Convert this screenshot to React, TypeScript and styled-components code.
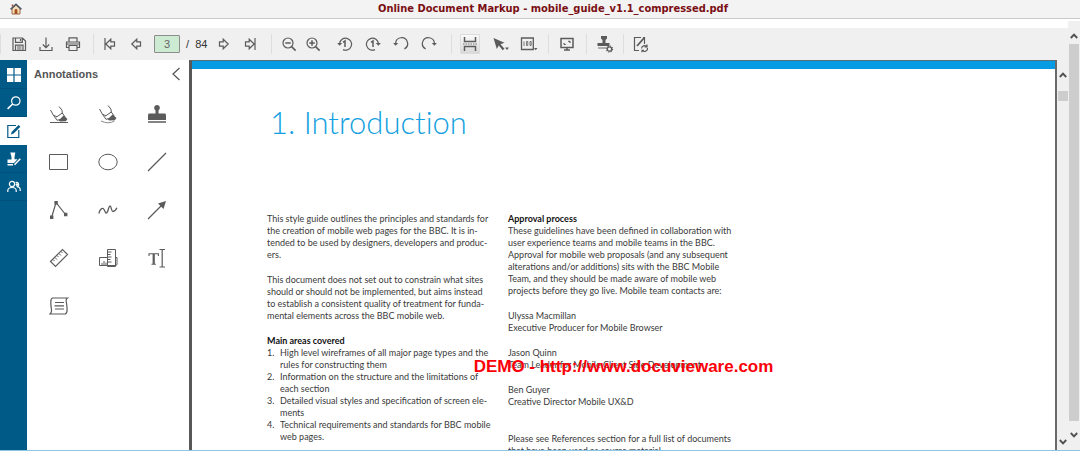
import React from "react";
import styled, { createGlobalStyle } from "styled-components";

const Global = createGlobalStyle`
  *, *::before, *::after { box-sizing: border-box; }
  body { margin: 0; background: #fff; font-family: "Liberation Sans", Arial, sans-serif; }
  button { font: inherit; }
`;

const Shell = styled.div`
  display: flex;
  flex-direction: column;
  height: 100vh;
  overflow: hidden;
  border-bottom: 1px solid #8cc6e4;
`;

const Header = styled.header`
  display: grid;
  grid-template-columns: 32px 1fr 6px;
  align-items: center;
  height: 19px;
  flex: none;
  background: #f3f3f3;
  border-bottom: 1px solid #c9c9c9;
`;

const HomeLink = styled.a`
  display: flex;
  justify-content: center;
`;

const Title = styled.h1`
  margin: 0;
  text-align: center;
  white-space: nowrap;
  color: #7a0f14;
  font: bold 11px/18px "DejaVu Sans Condensed", Tahoma, sans-serif;
`;

const Body = styled.div`
  display: flex;
  flex: 1;
  min-height: 0;
`;

const Viewer = styled.main`
  display: flex;
  flex-direction: column;
  flex: 1;
  min-width: 0;
  padding-top: 9px;
`;

const Toolbar = styled.div`
  display: flex;
  align-items: center;
  flex: none;
  height: 32px;
  background: #f0f0f0;
`;

const Group = styled.div<{ $pad?: number; $end?: number }>`
  display: flex;
  align-items: center;
  height: 20px;
  padding-left: ${(p) => p.$pad ?? 4}px;
  padding-right: ${(p) => p.$end ?? 5}px;
  border-left: 1px solid #dedede;
`;

const ToolButton = styled.button<{ $w?: number; $gap?: number }>`
  display: flex;
  align-items: center;
  justify-content: center;
  width: ${(p) => p.$w ?? 28}px;
  height: 20px;
  margin-left: ${(p) => p.$gap ?? 0}px;
  padding: 0;
  border: 0;
  background: none;
  color: #5b5b5b;
`;

const PressedButton = styled(ToolButton)`
  border: 1px solid #dcdcdc;
  border-radius: 1px;
  background: linear-gradient(#fafafa, #d8d8d8);
`;

const PageInput = styled.input`
  width: 26px;
  height: 18px;
  margin: 0 6px 0 4px;
  padding: 0;
  border: 1px solid #8c8c8c;
  border-radius: 1px;
  background: #cdebd2;
  color: #666;
  text-align: center;
  font: 11px "Liberation Sans", Arial, sans-serif;
`;

const PageTotal = styled.span`
  width: 23px;
  white-space: pre;
  color: #333;
  font: 11px "Liberation Sans", Arial, sans-serif;
`;

const Workspace = styled.div`
  display: flex;
  flex: 1;
  min-height: 0;
`;

const Rail = styled.nav`
  width: 27px;
  flex: none;
  padding-top: 1px;
  background: #005a87;
`;

const RailTab = styled.button<{ $active?: boolean }>`
  display: flex;
  align-items: center;
  justify-content: center;
  width: 27px;
  height: 28px;
  padding: 0;
  border: 0;
  border-bottom: 1px solid ${(p) => (p.$active ? "#fff" : "#00507c")};
  background: ${(p) => (p.$active ? "#fff" : "#005a87")};
  color: ${(p) => (p.$active ? "#005a87" : "#fff")};
`;

const Panel = styled.aside`
  width: 162px;
  flex: none;
  background: #fff;
`;

const PanelHeader = styled.div`
  display: flex;
  align-items: center;
  justify-content: space-between;
  height: 28px;
  padding: 0 8px 0 7px;
`;

const PanelTitle = styled.h2`
  margin: 0;
  color: #555;
  font: bold 11px/14px "Liberation Sans", Arial, sans-serif;
`;

const CollapseButton = styled.button`
  display: flex;
  padding: 0;
  border: 0;
  background: none;
  color: #555;
`;

const ToolGrid = styled.div`
  display: grid;
  grid-template-columns: repeat(3, 49px);
  grid-auto-rows: 48px;
  margin-top: 2px;
  padding-left: 7px;
`;

const GridButton = styled.button`
  display: flex;
  align-items: center;
  justify-content: center;
  padding: 0;
  border: 0;
  background: none;
  color: #5b5b5b;
`;

const Page = styled.article`
  position: relative;
  flex: 1;
  min-width: 0;
  overflow: hidden;
  border-top: 1px solid #5a6e78;
  border-left: 3px solid #585858;
  border-right: 2px solid #6a6a6a;
  background: #fff;
`;

const Banner = styled.div`
  height: 8px;
  background: #079be3;
`;

const Heading = styled.h2`
  margin: 33px 0 0 78px;
  color: #139fe0;
  font: 300 31px/40px Lato, "Gill Sans", sans-serif;
  font-variant-ligatures: none;
`;

const Columns = styled.div`
  display: grid;
  grid-template-columns: 241px 241px;
  margin: 71px 0 0 75px;
  color: #3a3a3a;
  font: 9px/12px Lato, "Gill Sans", sans-serif;
`;

const Column = styled.div`
  display: flex;
  flex-direction: column;
  gap: 13px;
`;

const Text = styled.p`
  margin: 0;
  white-space: pre;
`;

const SubHeading = styled.h3`
  margin: 0;
  color: #111;
  font: inherit;
  font-weight: bold;
`;

const Areas = styled.ol`
  margin: 0;
  padding: 0;
  list-style: none;
`;

const Area = styled.li`
  display: flex;
  white-space: pre;
`;

const AreaNumber = styled.span`
  width: 13px;
  flex: none;
`;

const Closing = styled(Text)`
  margin-top: 12px;
`;

const Watermark = styled.div`
  position: absolute;
  top: 297px;
  left: 50%;
  transform: translateX(-50%);
  white-space: nowrap;
  color: #fb0007;
  font: bold 17px/18px "Liberation Sans", Arial, sans-serif;
`;

const Track = styled.div<{ $top: number; $bottom: number }>`
  display: flex;
  flex-direction: column;
  align-items: center;
  flex: none;
  width: 11px;
  padding: ${(p) => p.$top}px 0 ${(p) => p.$bottom}px;
  background: #f0f0f0;
`;

const OuterTrack = styled(Track)`
  width: 12px;
  margin-top: 2px;
`;

const Arrow = styled.button`
  display: flex;
  padding: 0;
  border: 0;
  background: none;
  color: #505050;
`;

const Thumb = styled.div<{ $grow?: boolean }>`
  width: 10px;
  height: 10px;
  flex: ${(p) => (p.$grow ? "1" : "none")};
  margin: ${(p) => (p.$grow ? "5px 0 11px" : "13px 0 auto")};
  background: #cdcdcd;
`;

type IconProps = { w?: number; h?: number; sw?: number; children: React.ReactNode };
const Icon = ({ w = 16, h = 16, sw = 1.2, children }: IconProps) => (
  <svg width={w} height={h} viewBox={`0 0 ${w} ${h}`} fill="none" stroke="currentColor" strokeWidth={sw} aria-hidden="true">
    {children}
  </svg>
);

const Fill = { fill: "currentColor", stroke: "none" };

const Chevron = ({ down }: { down?: boolean }) => (
  <Icon w={8} h={6} sw={1.9}>
    <path d={down ? "M.8 1 4 4.4 7.2 1" : "M.8 5 4 1.6 7.2 5"} />
  </Icon>
);

const HomeIcon = () => (
  <Icon w={12} h={12} sw={1}>
    <path d="M2 5.500 6 2l4 3.500V11H2z" fill="#f1dcb8" stroke="#a06a48" />
    <path d="M.6 6.400 6 1.200l5.400 5.200" stroke="#4c5664" strokeWidth="1.500" />
    <path d="M2.500 1.500v2" stroke="#99482c" strokeWidth="1.500" />
    <path d="M4.600 11V7.500a1.400 1.400 0 0 1 2.800 0V11z" fill="#a84e22" stroke="none" />
  </Icon>
);

const LeftArrow = "M7.800 3.200v2.600h3.700v4.400H7.800v2.600L2.800 8z";
const RightArrow = "M8.200 3.200v2.600H4.500v4.400h3.700v2.600L13.200 8z";

const rotation = (clockwise: boolean, one: boolean) => (
  <Icon>
    <g transform={clockwise ? undefined : "matrix(-1 0 0 1 16 0)"}>
      <path d={one ? "M10 13.600A6 6 0 1 1 13.400 7.500" : "M4.600 13A6 6 0 1 1 13.400 7.500"} />
      <path d="M10.800 7h5l-2.400 2.800z" {...Fill} />
    </g>
    {one && <path d="M6 6.300 8 5v6" strokeWidth="1.500" />}
  </Icon>
);

const Magnifier = ({ plus }: { plus?: boolean }) => (
  <Icon>
    <circle cx="7" cy="7" r="5" />
    <path d="m10.600 10.600 4 4" strokeWidth="1.600" />
    <path d={plus ? "M4.300 7h5.400M7 4.300v5.400" : "M4.300 7h5.400"} strokeWidth="1.500" />
  </Icon>
);

const Highlighter = ({ curved }: { curved?: boolean }) => (
  <Icon w={20} h={20} sw={1}>
    <g transform={curved ? "translate(0 -1)" : undefined}>
      <path d="m1.500 6 2.800 5.200 3.700 1.600M10 2.500l3 3.700.3 3.300" />
      <path d="m4.500 11.300 3.500 5 4-1M7.500 13l5.800-4 3 4.300" />
      <path d="m9.800 16.200 4.800-4.700 3.900 3.500-1.700 2.200-5.800.3z" {...Fill} />
    </g>
    {curved ? <path d="M3 17q7 3.500 13.500 0" stroke="#8a8a8a" /> : <path d="M1 18.500h18" />}
  </Icon>
);

const SaveIcon = () => (
  <Icon>
    <path d="M2 2h9.500L14.500 5v9.500H2zM4.500 2.500v3.800h6.800V2.500M4.500 14.500V9.200h7.500v5.300M6 11h4.500M6 13h4.500M9.500 3v2" />
  </Icon>
);
const DownloadIcon = () => (
  <Icon><path d="M8 1.500v10M4.800 8.500 8 11.700l3.200-3.200M2 11v3.500h12V11" /></Icon>
);
const PrintIcon = () => (
  <Icon>
    <path d="M4 6V1.800h8V6M4 11.500H1.500V6h13v5.500H12M4 9.500h8v5H4z" />
    <path d="M2 8h12" strokeWidth="1" />
  </Icon>
);
const PageViewIcon = () => (
  <Icon>
    <path d="M2.500 1v4.500h11V1M2.500 15v-4.500h11V15" strokeWidth="1.500" />
    <path d="M1 8h14" strokeDasharray="1.500 1" strokeWidth="1.300" stroke="#999" />
  </Icon>
);
const PointerIcon = () => (
  <Icon w={18}>
    <path d="m1.500 2 11 4.800-4 1.400 4 4.500-1.800 1.500-3.900-4.600-2 3.400z" {...Fill} />
    <path d="M13 11.500h4l-2 2.500z" {...Fill} />
  </Icon>
);
const ZoomModeIcon = () => (
  <Icon w={18}>
    <path d="M1.500 2h11.800v11.500H1.500z" strokeWidth="1.300" />
    <path d="M4 5.500v4.500M6.500 5.500h1.300v4H6.500zM10 5.500h1.200v4H10z" strokeWidth=".8" />
    <path d="M14 12h3.500l-1.800 2.300z" {...Fill} />
  </Icon>
);
const ScreenIcon = () => (
  <Icon>
    <path d="M2 2.500h12v9H2zM8 11.500v2.500M5 14h6" strokeWidth="1.500" />
    <path d="M5 8.500V7m0 1.500h1.800M11 5.300H9.200M11 5.300V7" />
  </Icon>
);
const StampSettingsIcon = () => (
  <Icon w={18} h={18}>
    <path d="M5 1h6v2.500L9.500 5v3h4v3H1.500V8h5V5L5 3.500z" {...Fill} />
    <path d="M2 13h8" stroke="#999" strokeWidth="1.500" />
    <circle cx="13.500" cy="14" r="2.200" fill="#f0f0f0" />
    <circle cx="13.500" cy="14" r="3" strokeDasharray="1.200 1.150" strokeWidth="1.200" />
  </Icon>
);
const EditSyncIcon = () => (
  <Icon w={18} h={18}>
    <path d="M8 15.500H3.500v-13H10M13.500 9V2.500H12" />
    <path d="m6 11 7-8" strokeWidth="1.800" />
    <path d="M10.500 13.500a3 3 0 0 1 5.200-1.800M16.500 12.800a3 3 0 0 1-5 2.800M16 9.500v2.500h-2.500M11 17.300v-2h2" />
  </Icon>
);

const ThumbsIcon = () => (
  <Icon w={14} h={14}><path d="M0 0h6.400v6.400H0zM7.600 0H14v6.400H7.600zM0 7.600h6.400V14H0zM7.600 7.600H14V14H7.600z" {...Fill} /></Icon>
);
const SearchIcon = () => (
  <Icon w={14} h={14}><circle cx="8.800" cy="5" r="4.200" /><path d="M5.700 8 .6 12.800" strokeWidth="1.600" /></Icon>
);
const NoteEditIcon = () => (
  <Icon w={14} h={14}>
    <path d="M9 1.500H.800v12h11V6" />
    <path d="m3.800 10.500 1-2.800L11.600 1l1.800 1.700-6.800 6.700z" {...Fill} />
  </Icon>
);
const StampEditIcon = () => (
  <Icon w={14} h={14}>
    <path d="M3.300.500h5L7.500 5v2.200h3L7 11H.5V7.500h4V5z" {...Fill} />
    <path d="M.5 12.700h5.500M7.500 12.800l5.800-6" strokeWidth="1.500" />
  </Icon>
);
const UsersIcon = () => (
  <Icon w={14} h={14}>
    <circle cx="5" cy="4" r="2.600" />
    <path d="M.8 12V10.500Q1 7.500 5 7.500t4.200 3V12M8.600 2.500a2.200 2.200 0 1 1 1 4.200q3.400 0 3.600 3V11" />
    <circle cx="10" cy="4.600" r="1.400" {...Fill} />
  </Icon>
);

const StampIcon = () => (
  <Icon w={20} h={20}>
    <path d="M8.500 9.500V6.500Q6.800 5.300 7.200 3a2.900 2.600 0 0 1 5.600 0q.4 2.300-1.300 3.500v3h6.800l.7 1.500v5H1v-5l.7-1.500z" {...Fill} />
    <path d="M1 18h18" strokeWidth="1.500" />
  </Icon>
);
const PolygonIcon = () => (
  <Icon w={20} h={20}>
    <path d="M2.600 17.500 7 2.500l9.500 12" />
    <path d="M1 15.500h3.400V19H1zM5.400 1h3.400v3.400H5.400zM15 12.800h3.400v3.400H15z" {...Fill} />
  </Icon>
);
const FreehandIcon = () => (
  <Icon w={20} h={20}>
    <path d="M.8 13.500C2 9 4.500 7 6 9.500s1.500 4.500 3 3 1.500-6.500 3-6.500 1.200 5.500 2.800 5.500S18 10 18.900 7.800" strokeWidth="1.300" />
  </Icon>
);
const RulerIcon = () => (
  <Icon w={20} h={20}>
    <path d="M1.500 13.500 13.500 1.500l5 5-12 12z" />
    <path d="m4 11.500 1.500 1.500M6 9.500l2 2M8 7.500 9.500 9M10 5.500l2 2M12 3.500 13.500 5" strokeWidth="1" />
  </Icon>
);
const AreaIcon = () => (
  <Icon w={20} h={20} sw={1}>
    <path d="M9.500 9.500h-8v8h16q1.500 0 1.500-1.500V9.500h-1.500M9.500 1.500h8v17h-8z" />
    <path d="M10 4h3.500M10 6.500h2.500M10 9h3.500M10 11.500h2.500M10 14h3.500M4 17v-2M6 17v-4M8 17v-2.500" />
  </Icon>
);
const TextIcon = () => (
  <Icon w={20} h={20}>
    <path d="M2 8V5.700h9.400V8M4.500 16.200h4.400" strokeWidth="1.100" />
    <path d="M6.700 6v10" strokeWidth="2.200" />
    <path d="M12.500 1.500H18M12.500 19H18M15.200 1.500V19" />
  </Icon>
);
const NoteIcon = () => (
  <Icon w={20} h={20}>
    <path d="M3.500 2h15q-1.800 1-1.200 4t.8 7-1.800 5H1q2-1.500 1.400-5T1.800 6t1.700-4z" />
    <path d="M6 6.500h9M5.500 9.800h9.500M6 13h9" />
  </Icon>
);

const gridTools: [string, React.ReactNode][] = [
  ["Highlighter", <Highlighter />],
  ["Freehand highlighter", <Highlighter curved />],
  ["Rubber stamp", <StampIcon />],
  ["Rectangle", <Icon w={20} h={20} sw={1}><path d="M.5 2.500h18v15H.5z" /></Icon>],
  ["Ellipse", <Icon w={20} h={20} sw={1}><ellipse cx="10" cy="10" rx="9.200" ry="7.800" /></Icon>],
  ["Line", <Icon w={20} h={20}><path d="M1 19 19 1" /></Icon>],
  ["Polygon", <PolygonIcon />],
  ["Freehand", <FreehandIcon />],
  ["Arrow", <Icon w={20} h={20}><path d="M1 19 15 5" /><path d="m19 1-8 2.500L16.500 9z" {...Fill} /></Icon>],
  ["Ruler", <RulerIcon />],
  ["Area measurement", <AreaIcon />],
  ["Text", <TextIcon />],
  ["Note", <NoteIcon />],
];

const areas = [
  "High level wireframes of all major page types and the\nrules for constructing them",
  "Information on the structure and the limitations of\neach section",
  "Detailed visual styles and specification of screen ele-\nments",
  "Technical requirements and standards for BBC mobile\nweb pages.",
];

export default function App() {
  return (
    <Shell>
      <Global />
      <Header>
        <HomeLink href="#" aria-label="Home"><HomeIcon /></HomeLink>
        <Title>Online Document Markup - mobile_guide_v1.1_compressed.pdf</Title>
      </Header>
      <Body>
        <Viewer>
          <Toolbar>
            <Group $end={7}>
              <ToolButton $w={27} aria-label="Save"><SaveIcon /></ToolButton>
              <ToolButton $w={27} aria-label="Download"><DownloadIcon /></ToolButton>
              <ToolButton $w={27} aria-label="Print"><PrintIcon /></ToolButton>
            </Group>
            <Group $pad={2} $end={8}>
              <ToolButton $w={27} aria-label="First page"><Icon><path d={`${LeftArrow}M2 2v12`} transform="translate(1 0)" /></Icon></ToolButton>
              <ToolButton $w={27} aria-label="Previous page"><Icon><path d={LeftArrow} /></Icon></ToolButton>
              <PageInput aria-label="Page number" defaultValue="3" />
              <PageTotal>/  84</PageTotal>
              <ToolButton $w={27} aria-label="Next page"><Icon><path d={RightArrow} /></Icon></ToolButton>
              <ToolButton $w={27} aria-label="Last page"><Icon><path d={`${RightArrow}M14 2v12`} transform="translate(-1 0)" /></Icon></ToolButton>
            </Group>
            <Group $pad={5} $end={8}>
              <ToolButton $w={24} aria-label="Zoom out"><Magnifier /></ToolButton>
              <ToolButton $w={24} aria-label="Zoom in"><Magnifier plus /></ToolButton>
              <ToolButton $gap={6} aria-label="Rotate page left">{rotation(false, true)}</ToolButton>
              <ToolButton aria-label="Rotate page right">{rotation(true, true)}</ToolButton>
              <ToolButton aria-label="Rotate all left">{rotation(false, false)}</ToolButton>
              <ToolButton aria-label="Rotate all right">{rotation(true, false)}</ToolButton>
            </Group>
            <Group $pad={8}>
              <PressedButton $w={20} aria-label="Continuous view" aria-pressed="true"><PageViewIcon /></PressedButton>
              <ToolButton $gap={7} aria-label="Pointer mode"><PointerIcon /></ToolButton>
              <ToolButton aria-label="Zoom mode"><ZoomModeIcon /></ToolButton>
            </Group>
            <Group><ToolButton aria-label="Full screen"><ScreenIcon /></ToolButton></Group>
            <Group $end={4}><ToolButton aria-label="Stamp settings"><StampSettingsIcon /></ToolButton></Group>
            <Group $pad={2}><ToolButton aria-label="Update annotations"><EditSyncIcon /></ToolButton></Group>
          </Toolbar>
          <Workspace>
            <Rail>
              <RailTab aria-label="Thumbnails"><ThumbsIcon /></RailTab>
              <RailTab aria-label="Search"><SearchIcon /></RailTab>
              <RailTab $active aria-label="Annotations"><NoteEditIcon /></RailTab>
              <RailTab aria-label="Stamps"><StampEditIcon /></RailTab>
              <RailTab aria-label="Users"><UsersIcon /></RailTab>
            </Rail>
            <Panel>
              <PanelHeader>
                <PanelTitle>Annotations</PanelTitle>
                <CollapseButton aria-label="Collapse panel"><Icon w={10} h={14}><path d="M8.500 1 2 7l6.500 6" /></Icon></CollapseButton>
              </PanelHeader>
              <ToolGrid>
                {gridTools.map(([name, icon]) => (
                  <GridButton key={name} aria-label={name}>{icon}</GridButton>
                ))}
              </ToolGrid>
            </Panel>
            <Page>
              <Banner />
              <Heading>1. Introduction</Heading>
              <Columns>
                <Column>
                  <Text>{"This style guide outlines the principles and standards for\nthe creation of mobile web pages for the BBC. It is in-\ntended to be used by designers, developers and produc-\ners."}</Text>
                  <Text>{"This document does not set out to constrain what sites\nshould or should not be implemented, but aims instead\nto establish a consistent quality of treatment for funda-\nmental elements across the BBC mobile web."}</Text>
                  <section>
                    <SubHeading>Main areas covered</SubHeading>
                    <Areas>
                      {areas.map((text, i) => (
                        <Area key={text}><AreaNumber>{i + 1}.</AreaNumber><span>{text}</span></Area>
                      ))}
                    </Areas>
                  </section>
                </Column>
                <Column>
                  <section>
                    <SubHeading>Approval process</SubHeading>
                    <Text>{"These guidelines have been defined in collaboration with\nuser experience teams and mobile teams in the BBC.\nApproval for mobile web proposals (and any subsequent\nalterations and/or additions) sits with the BBC Mobile\nTeam, and they should be made aware of mobile web\nprojects before they go live. Mobile team contacts are:"}</Text>
                  </section>
                  <Text>{"Ulyssa Macmillan\nExecutive Producer for Mobile Browser"}</Text>
                  <Text>{"Jason Quinn\nTeam Leader for Mobile Client Side Development"}</Text>
                  <Text>{"Ben Guyer\nCreative Director Mobile UX&D"}</Text>
                  <Closing>{"Please see References section for a full list of documents\nthat have been used as source material."}</Closing>
                </Column>
              </Columns>
              <Watermark>DEMO - http://www.docuvieware.com</Watermark>
            </Page>
            <Track $top={12} $bottom={5}>
              <Arrow aria-label="Scroll document up"><Chevron /></Arrow>
              <Thumb />
              <Arrow aria-label="Scroll document down"><Chevron down /></Arrow>
            </Track>
          </Workspace>
        </Viewer>
        <OuterTrack $top={12} $bottom={12}>
          <Arrow aria-label="Scroll up"><Chevron /></Arrow>
          <Thumb $grow />
          <Arrow aria-label="Scroll down"><Chevron down /></Arrow>
        </OuterTrack>
      </Body>
    </Shell>
  );
}
